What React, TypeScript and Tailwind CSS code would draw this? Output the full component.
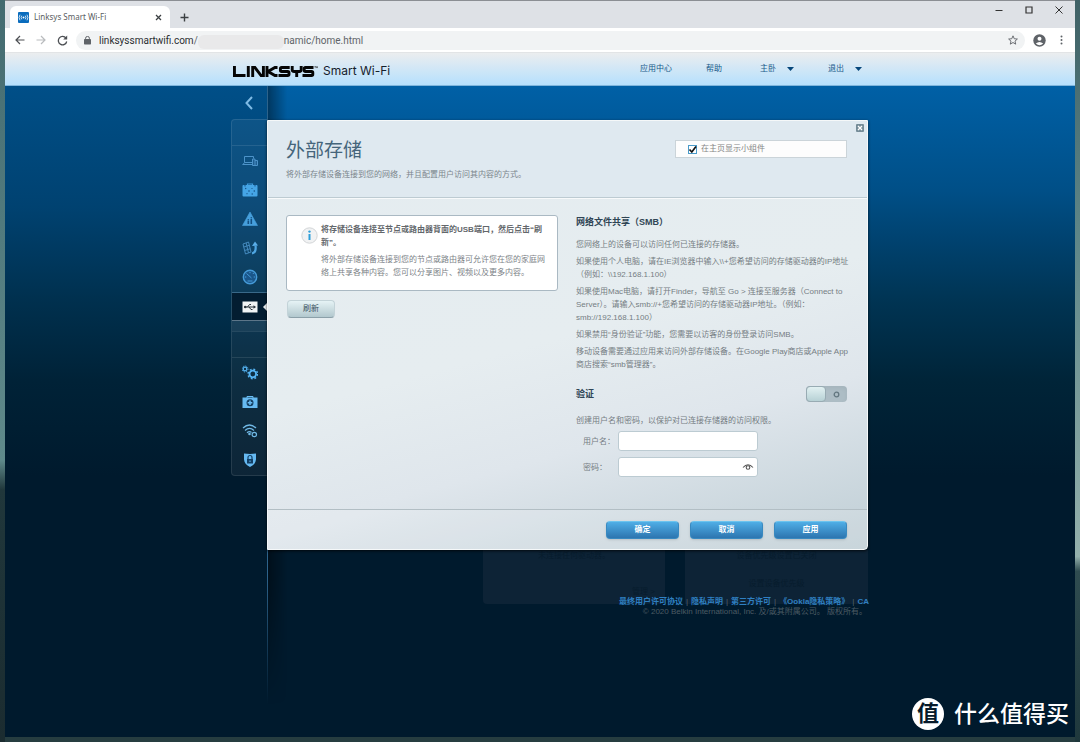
import React from "react";

const CJK = "font-['Liberation_Sans','Noto_Sans_CJK_SC',sans-serif]";
const UI = "font-['Roboto','Noto_Sans_CJK_SC',sans-serif]";

function BrowserBar() {
  return (
    <div className={UI}>
      <div className="flex h-7 items-end border-t border-[#8b8e93] bg-[#dee1e6] pl-[5px]">
        <div className="flex h-[22px] w-40 items-center rounded-t-md bg-white pl-2 pr-1.5 text-[9px] text-[#5a5d61]">
          <svg className="mr-[5px]" width="11" height="11" viewBox="0 0 11 11">
            <rect width="11" height="11" rx="1" fill="#0a6cbd" />
            <circle cx="5.5" cy="5.5" r="1" fill="#fff" />
            <path d="M3.7 3.7q-1.3 1.8 0 3.6M7.3 3.7q1.3 1.8 0 3.6M2 2.7q-1.8 2.8 0 5.6M9 2.7q1.8 2.8 0 5.6" fill="none" stroke="#fff" strokeWidth="0.8" />
          </svg>
          <span className="flex-1 font-['Noto_Sans',sans-serif] text-[8px]">Linksys Smart Wi-Fi</span>
          <button aria-label="Close tab" className="p-0.5">
            <svg width="7" height="7" viewBox="0 0 7 7"><path d="M1 1l5 5M6 1L1 6" stroke="#3c4043" strokeWidth="1.3" /></svg>
          </button>
        </div>
        <button aria-label="New tab" className="ml-2.5 flex h-[22px] items-center">
          <svg width="9" height="9" viewBox="0 0 9 9"><path d="M4.500 .5v8M.5 4.500h8" stroke="#3c4043" strokeWidth="1.4" /></svg>
        </button>
        <div className="flex h-7 flex-1 items-start justify-end gap-[22px] pr-3 pt-1.5">
          <button aria-label="Minimize"><svg width="8" height="8" viewBox="0 0 8 8"><path d="M.5 4.500h7" stroke="#333" /></svg></button>
          <button aria-label="Maximize"><svg width="8" height="8" viewBox="0 0 8 8"><path d="M1 1h6v6H1z" fill="none" stroke="#333" strokeWidth="1.2" /></svg></button>
          <button aria-label="Close window"><svg width="8" height="8" viewBox="0 0 8 8"><path d="M.5.5l7 7M7.500.5l-7 7" stroke="#333" /></svg></button>
        </div>
      </div>
      <div className="flex h-[25px] items-center border-b border-[#e2e4e6] bg-white pl-2.5 pr-3">
        <div className="flex items-center gap-[11px]">
          <button aria-label="Back"><svg width="10" height="10" viewBox="0 0 10 10"><path d="M9.500 5H1M5 1L1 5l4 4" fill="none" stroke="#4c4f53" strokeWidth="1.2" /></svg></button>
          <button aria-label="Forward"><svg width="10" height="10" viewBox="0 0 10 10"><path d="M.5 5H9M5 1l4 4-4 4" fill="none" stroke="#b9bbbe" strokeWidth="1.2" /></svg></button>
          <button aria-label="Reload"><svg width="11" height="11" viewBox="0 0 11 11"><path d="M9 3.200A4.200 4.200 0 1 0 9.700 6.500" fill="none" stroke="#4c4f53" strokeWidth="1.3" /><path d="M10.200.6v4H6.200z" fill="#4c4f53" /></svg></button>
        </div>
        <div className="ml-2 flex h-[19px] flex-1 items-center rounded-full bg-[#f1f3f4] pl-2 pr-[7px]">
          <svg className="mr-2" width="7" height="9" viewBox="0 0 7 9"><rect y="3" width="7" height="5.500" rx=".7" fill="#5f6368" /><path d="M1.600 3.500V2.300a1.900 1.900 0 0 1 3.800 0v1.200" fill="none" stroke="#5f6368" /></svg>
          <span className="flex flex-1 items-center text-[10px] text-[#606468]">
            <span className="text-[#2b2e31]">linksyssmartwifi.com</span>/
            <span className="mt-[3px] h-3.5 w-[86px] rounded-md bg-[#e9e9ea]" />
            namic/home.html
          </span>
          <button aria-label="Bookmark"><svg width="10" height="10" viewBox="0 0 24 24"><path d="M12 2l3 7 7.500.7-5.700 5 1.700 7.300L12 18l-6.500 4 1.700-7.300-5.700-5L9 9z" fill="none" stroke="#5f6368" strokeWidth="2.200" /></svg></button>
        </div>
        <button aria-label="Profile" className="ml-2"><svg width="13" height="13" viewBox="0 0 13 13"><circle cx="6.500" cy="6.500" r="6.200" fill="#5f6368" /><circle cx="6.500" cy="4.700" r="2" fill="#fff" /><path d="M2.800 9.500q3.700-3.200 7.400 0-3.700 3.500-7.400 0" fill="#fff" /></svg></button>
        <button aria-label="Menu" className="ml-3.5"><svg width="3" height="10" viewBox="0 0 3 10"><g fill="#5f6368"><circle cx="1.500" cy="1.500" r="1" /><circle cx="1.500" cy="5" r="1" /><circle cx="1.500" cy="8.500" r="1" /></g></svg></button>
      </div>
    </div>
  );
}

function LinksysLogo() {
  return (
    <svg width="85" height="12" viewBox="0 0 85 12" role="img" aria-label="Linksys">
      <g fill="none" stroke="#050505" strokeWidth="2.900">
        <path d="M1.450 0v9.550H12.500" />
        <path d="M15.300 0v11" />
        <path d="M19.700 11V1.450h2.200l6.200 8.100h2.300V0" />
        <path d="M44.500 1.450h-2.600L35 5.500l6.900 4.050h2.600M34 0v11" />
        <path d="M56.700 1.450h-8q-1.300 0-1.300 1.300v1.450q0 1.300 1.300 1.300h6q1.300 0 1.300 1.300v1.450q0 1.300-1.300 1.300H45.500" />
        <path d="M59.200 0v3.800q0 1.700 2 1.700h5q2 0 2-1.700V0M63.700 5.500V11" />
        <path d="M80.500 1.450h-8q-1.300 0-1.300 1.300v1.450q0 1.300 1.300 1.300h6q1.300 0 1.300 1.300v1.450q0 1.300-1.300 1.300H69.500" />
      </g>
      <path d="M81.500 .5h1.400M82.200 .5v1.600M83.400 2.100V.5l.6 1 .6-1v1.600" fill="none" stroke="#222" strokeWidth=".5" />
    </svg>
  );
}

const Caret = () => (
  <svg width="7" height="4" viewBox="0 0 7 4"><path d="M0 0h7L3.500 4z" fill="#06467a" /></svg>
);

function SiteHeader() {
  return (
    <header className="h-[33px] border-b border-[#7fb5dc] bg-gradient-to-b from-[#ebedef] to-[#b5e0fd]">
      <div className="mx-auto flex h-full max-w-[656px] items-center pl-[21px]">
        <a href="#home" className="flex items-end gap-[5px] pt-1 text-xs leading-[14px] text-[#15202b] font-['Inter',sans-serif]">
          <LinksysLogo />
          <span>Smart Wi-Fi</span>
        </a>
        <nav className="flex flex-1 items-center justify-end pr-1.5 text-[8px] text-[#175a8a]">
          <a href="#apps" className="mr-[34px]">应用中心</a>
          <a href="#help" className="mr-[38px]">帮助</a>
          <a href="#room" className="mr-[34px] flex items-center gap-[11px]">主卧 <Caret /></a>
          <a href="#logout" className="flex items-center gap-[11px]">退出 <Caret /></a>
        </nav>
      </div>
    </header>
  );
}

const icons: { label: string; art: React.ReactNode }[] = [
  { label: "设备列表", art: <g fill="none" stroke="#4c93c9"><path d="M2.500 9.500v-6h9V5.500M.5 11.500h9.500M1 11.500l1.500-2h7.500" /><path d="M10.500 6h2.500v6.500h-2.500zM13 7.500h2.500v5H13" fill="#1f5f92" /></g> },
  { label: "访客访问", art: <g><path d="M5.500 3.500V2h5v1.500" fill="none" stroke="#3f9bdd" strokeWidth="1.200" /><rect x=".5" y="3" width="15" height="11.500" rx="1" fill="#45a5e6" /><g fill="#155187"><circle cx="3.700" cy="6.500" r=".7" /><circle cx="7" cy="9" r=".8" /><circle cx="10" cy="6.500" r=".6" /><circle cx="12.300" cy="9" r=".8" /><circle cx="5" cy="11.700" r=".6" /><circle cx="10.200" cy="12" r=".7" /><path d="M2.500 3h1v1.500h-1zM12.500 3h1v1.500h-1z" /></g></g> },
  { label: "家长控制", art: <g><path d="M8 1l7.500 13.500H.5z" fill="#469fdc" stroke="#469fdc" strokeWidth=".6" strokeLinejoin="round" /><g fill="#124f82"><circle cx="6.300" cy="8.700" r=".8" /><path d="M5.500 9.700h1.600v3.300H5.500z" /><circle cx="9.300" cy="6.800" r=".8" /><path d="M8.500 8h1.600v5H8.500z" /></g></g> },
  { label: "设备优先级", art: <g fill="none" stroke="#4489bd"><path d="M1 4l5.500-2L9 12l-5.500 2zM1.800 7l5.500-1.800M2.700 10.500l5.500-1.800M4.200 3l2.300 10" /><path d="M10 13.500q4.500-1 3.500-8" stroke="#4fa6e2" strokeWidth="2.200" /><path d="M10 6l3-4.500L16 5.500z" fill="#5aaee8" stroke="none" /></g> },
  { label: "测速", art: <g fill="none" stroke="#459ad8"><circle cx="8" cy="8" r="6.700" strokeWidth="1.400" fill="#1a568a" /><path d="M4.500 4.500l5 4.500M8 2.800v1.400M11.700 8h1.500M2.800 8h1.500M10.800 5l1-1M5.500 12h5" /></g> },
];

const lowerIcons: { label: string; art: React.ReactNode }[] = [
  { label: "连接", art: <g fill="none" stroke="#56b5f4"><circle cx="3" cy="4" r="1.800" strokeWidth="1.200" /><circle cx="3" cy="4" r="3" strokeDasharray="1.200 1.160" /><circle cx="10.800" cy="9" r="3.300" strokeWidth="1.800" /><circle cx="10.800" cy="9" r="4.800" strokeWidth="1.400" strokeDasharray="1.900 1.870" /></g> },
  { label: "故障排除", art: <g><path d="M5 4V2.500h6V4" fill="none" stroke="#68bdf4" /><path d="M.5 3.500h15V14H.5z" fill="#66baf1" /><circle cx="8" cy="8.700" r="3.500" fill="#143e60" /><path d="M8 6.400v4.600M5.700 8.700h4.600" stroke="#66baf1" strokeWidth="1.600" /></g> },
  { label: "无线", art: <g fill="none" stroke="#70b8e5" strokeWidth="1.200"><path d="M1 5q6.500-6 13 0M3 7.500q4.500-4.200 9 0M5 9.700q2.500-2.200 4.500-.2" /><circle cx="7.500" cy="11" r=".7" /><circle cx="12.300" cy="11.500" r="2.200" /></g> },
  { label: "安全", art: <g><path d="M2 1.500q6 .8 12 0v6q-.5 5-6 7.500-5.500-2.500-6-7.500z" fill="#65b9f1" /><path d="M5 7h6v4.500H5z" fill="#123f65" /><path d="M6 7V5.500a2 2 0 0 1 4 0V7" fill="none" stroke="#123f65" strokeWidth="1.200" /><path d="M8 8.500v1.500" stroke="#65b9f1" /></g> },
];

function NavIcon({ label, art }: { label: string; art: React.ReactNode }) {
  return (
    <button aria-label={label} className="flex h-[29px] w-full items-center justify-center">
      <svg width="16" height="16" viewBox="0 0 16 16">{art}</svg>
    </button>
  );
}

function Sidebar() {
  return (
    <nav className="w-9 pt-2">
      <button aria-label="返回" className="flex h-[18px] w-full items-center justify-center">
        <svg width="8" height="14" viewBox="0 0 8 14"><path d="M7 1L1.500 7 7 13" fill="none" stroke="#7fbbe5" strokeWidth="2" /></svg>
      </button>
      <div className="mt-[7px] rounded-l-sm border border-r-0 border-white/10 bg-white/5">
        <div className="h-[26px] border-b border-white/10" />
        <div className="flex h-[146px] flex-col">
          {icons.map((i) => <NavIcon key={i.label} {...i} />)}
        </div>
        <button aria-label="外部存储" aria-current="page" className="relative flex h-[29px] w-full items-center justify-center border-y border-t-[#396989] border-b-[#5d7689] bg-[#031d31]">
          <svg width="16" height="16" viewBox="0 0 16 16"><path d="M.5 2.500h15v11H.5z" fill="#f1f4f5" /><path d="M3 8h9.500M5.500 8l2-2.500H9M7 8l2 2.500h1.500" fill="none" stroke="#29333a" /><circle cx="3.200" cy="8" r="1.300" fill="#29333a" /><path d="M11.500 6.200L14 8l-2.500 1.800z" fill="#29333a" /></svg>
          <svg className="absolute right-0" width="4" height="8" viewBox="0 0 4 8"><path d="M4 0v8L0 4z" fill="#eef2f4" /></svg>
        </button>
        <div className="h-2.5 bg-white/5" />
        <div className="h-[27px] border-y border-white/10" />
        <div className="flex flex-col pb-px">
          {lowerIcons.map((i) => <NavIcon key={i.label} {...i} />)}
        </div>
      </div>
    </nav>
  );
}

function InfoBox() {
  return (
    <div className="flex rounded-[3px] border border-[#aab9c3] bg-white pb-[11px] pl-3.5 pr-2 pt-[7px]">
      <svg className="mr-[3px] mt-1 shrink-0" width="17" height="17" viewBox="0 0 17 17">
        <circle cx="8.500" cy="8.500" r="7.700" fill="#f1f2f3" stroke="#d2d5d7" />
        <path d="M8.500 7v6" stroke="#2d9fd9" strokeWidth="2" /><circle cx="8.500" cy="4.600" r="1.200" fill="#2d9fd9" />
      </svg>
      <div className="text-[8px] leading-[13px]">
        <p className="font-bold text-[#63676b]">将存储设备连接至节点或路由器背面的USB端口，然后点击“刷<wbr />新”。</p>
        <p className="mt-1 text-[#7c8287]">将外部存储设备连接到您的节点或路由器可允许您在您的家庭网络上共享各种内容。您可以分享图片、视频以及更多内容。</p>
      </div>
    </div>
  );
}

function SmbSettings() {
  return (
    <div className="pt-px text-[8px] leading-[13px] text-[#757d83]">
      <h2 className="text-[9px] font-bold text-[#2f4555]">网络文件共享（SMB）</h2>
      <div className="-mr-4 mt-[9px] flex flex-col gap-1">
        <p>您网络上的设备可以访问任何已连接的存储器。</p>
        <p>如果使用个人电脑，请在IE浏览器中输入\\+您希望访问的存储驱动器的IP地址<br />（例如：\\192.168.1.100）</p>
        <p>如果使用Mac电脑，请打开Finder，导航至 Go &gt; 连接至服务器（Connect to<br />Server）。请输入smb://+您希望访问的存储驱动器IP地址。（例如：<br />smb://192.168.1.100）</p>
        <p>如果禁用“身份验证”功能，您需要以访客的身份登录访问SMB。</p>
        <p>移动设备需要通过应用来访问外部存储设备。在Google Play商店或Apple App<br />商店搜索“smb管理器”。</p>
      </div>
      <div className="mt-[15px] flex h-4 items-center justify-between">
        <h2 className="text-[9px] font-bold text-[#2f4555]">验证</h2>
        <button role="switch" aria-checked="false" aria-label="验证" className="flex h-4 w-[41px] items-center rounded-sm bg-[#adbdc5] shadow-inner">
          <span className="h-4 w-5 rounded-sm border border-[#98abb3] bg-gradient-to-b from-[#e2f1f2] to-[#b7d1d5]" />
          <svg className="m-auto" width="7" height="7" viewBox="0 0 7 7"><circle cx="3.500" cy="3.500" r="2.300" fill="none" stroke="#637780" strokeWidth="1.300" /></svg>
        </button>
      </div>
      <p className="mt-3">创建用户名和密码，以保护对已连接存储器的访问权限。</p>
      <div className="mt-1 flex items-center pl-[7px]">
        <label htmlFor="user" className="w-[35px]">用户名：</label>
        <input id="user" className="h-5 w-[140px] rounded-[3px] border border-[#bccbd2] bg-white px-1 text-[9px]" />
      </div>
      <div className="mt-1.5 flex items-center pl-[7px]">
        <label htmlFor="pass" className="w-[35px]">密码：</label>
        <div className="relative flex w-[140px] items-center">
          <input id="pass" type="password" className="h-5 w-full rounded-[3px] border border-[#bccbd2] bg-white pl-1 pr-5 text-[9px]" />
          <button aria-label="显示密码" className="absolute right-1">
            <svg width="12" height="8" viewBox="0 0 12 8"><path d="M1 4.500q5-5.500 10 0" fill="none" stroke="#555" strokeWidth="1.100" /><circle cx="6" cy="4.500" r="1.800" fill="none" stroke="#555" strokeWidth="1.100" /></svg>
          </button>
        </div>
      </div>
    </div>
  );
}

function StoragePanel() {
  return (
    <main className="relative w-[601px] rounded-br-sm border border-[#f5f8f9] bg-[linear-gradient(165deg,#e4ecf0_0%,#e6edf0_50%,#dfe6ec_70%,#bfced5_100%)] shadow-[0_1px_3px_#000b]">
      <div className="flex h-[77px] items-start justify-between border-b border-[#bdcbd2] bg-[#dfe9f0] pl-[18px] pr-5 pt-[17px]">
        <div>
          <h1 className="text-[19px] leading-[26px] text-[#45657b]">外部存储</h1>
          <p className="mt-1 text-[8px] leading-[13px] text-[#7b858c]">将外部存储设备连接到您的网络，并且配置用户访问其内容的方式。</p>
        </div>
        <label className="mt-0.5 flex h-[18px] w-[172px] items-center gap-1 border border-[#cbd4d9] bg-[#fdfdfd] pl-3 text-[8px] text-[#858585]">
          <span className="relative flex size-[9px]">
            <input type="checkbox" defaultChecked className="peer size-[9px] appearance-none border border-[#4a9bc9] bg-white" />
            <svg className="pointer-events-none absolute inset-0 hidden peer-checked:block" width="9" height="9" viewBox="0 0 9 9"><path d="M1.500 4.500L3.800 7 8 1.500" fill="none" stroke="#111" strokeWidth="1.700" /></svg>
          </span>
          在主页显示小组件
        </label>
      </div>
      <button aria-label="关闭" className="absolute right-[3px] top-[3px]">
        <svg width="8" height="8" viewBox="0 0 8 8"><rect width="8" height="8" rx="1" fill="#758c98" /><path d="M2 2l4 4M6 2L2 6" stroke="#fff" strokeWidth="1.300" /></svg>
      </button>
      <div className="grid grid-cols-[272px_1fr] gap-x-[18px] border-t border-white/70 pb-8 pl-[18px] pr-5 pt-4">
        <div>
          <InfoBox />
          <button className="ml-px mt-[9px] block h-[18px] w-12 rounded-sm border border-[#c3d3d8] border-b-[#8ba0a9] bg-gradient-to-b from-[#e6f3f5] to-[#b2c8ce] text-[8px] text-[#38505e]">刷新</button>
        </div>
        <SmbSettings />
      </div>
      <div className="flex h-10 items-center justify-end gap-[11px] border-t border-[#b2bec4] bg-white/15 pr-5 text-[8px] font-bold text-white">
        {["确定", "取消", "应用"].map((t) => (
          <button key={t} className="h-[18px] w-[73px] rounded-sm border border-[#3889c0] border-t-[#6dc4ee] bg-gradient-to-b from-[#4faee6] to-[#2d75b0] shadow-sm">{t}</button>
        ))}
      </div>
    </main>
  );
}

function Footer() {
  const links = ["最终用户许可协议", "隐私声明", "第三方许可", "《Ookla隐私策略》", "CA"];
  return (
    <footer className="w-[602px] text-right text-[8px]">
      <div className="flex justify-end gap-5 pr-px text-[#071c2d]">
        <div className="flex h-[54px] w-[182px] flex-col justify-between rounded-b-sm bg-[#0d2336] pb-1.5">
          <p className="text-center">未连接任何驱动器。</p>
          <p className="pr-2.5">管理 &gt;</p>
        </div>
        <div className="flex h-[54px] w-[183px] flex-col justify-between bg-[#0d2336] pb-3.5 text-center">
          <p>设备优先级设置已关闭</p>
          <p>设置设备优先级</p>
        </div>
      </div>
      <ul className="-mt-2 flex justify-end font-bold leading-[11px] text-[#2f80c2]">
        {links.map((t, i) => (
          <li key={t} className="flex">
            {i > 0 && <span className="px-[3px] font-normal text-[#53636f]">|</span>}
            <a href="#legal">{t}</a>
          </li>
        ))}
      </ul>
      <p className="pr-0.5 leading-[10px] text-[#4c5a64]">© 2020 Belkin International, Inc. 及/或其附属公司。 版权所有。</p>
    </footer>
  );
}

export default function App() {
  return (
    <div className={"flex min-h-screen bg-[#263d40] " + CJK}>
      <div className="w-[5px] bg-[linear-gradient(#446b70_0%,#5f8a8b_62%,#20373b_66%,#1b2c30_100%)]" />
      <div className="flex flex-1 flex-col pb-[5px]">
        <BrowserBar />
        <SiteHeader />
        <div className="relative flex flex-1 bg-[linear-gradient(#0060a6_0px,#004f87_105px,#00426f_155px,#003453_215px,#002438_295px,#001a2d_390px)]">
          <div className="flex w-[calc(50%-273px)] shrink-0 justify-end bg-[linear-gradient(#004f88_0px,#004271_120px,#00304e_215px,#002237_295px,#001a2d_390px)]">
            <Sidebar />
          </div>
          <div className="w-5 shrink-0 border-l border-[#2d638b] bg-gradient-to-r from-black/40 to-transparent [mask-image:linear-gradient(black_75%,transparent_95%)]" />
          <div className="-ml-5 pt-[34px]">
            <StoragePanel />
            <Footer />
          </div>
          <div className="absolute bottom-1.5 right-1.5 flex items-center gap-2.5 text-[23px] font-medium text-white">
            <span className="flex size-8 items-center justify-center rounded-full bg-white text-[22px] font-bold text-[#071b2b]">值</span>
            <span>什么值得买</span>
          </div>
        </div>
      </div>
      <div className="w-[5px] bg-[linear-gradient(#3f6166_0%,#5c8486_30%,#93b0ac_75%,#2f4c50_77%,#1f383c_100%)]" />
    </div>
  );
}
